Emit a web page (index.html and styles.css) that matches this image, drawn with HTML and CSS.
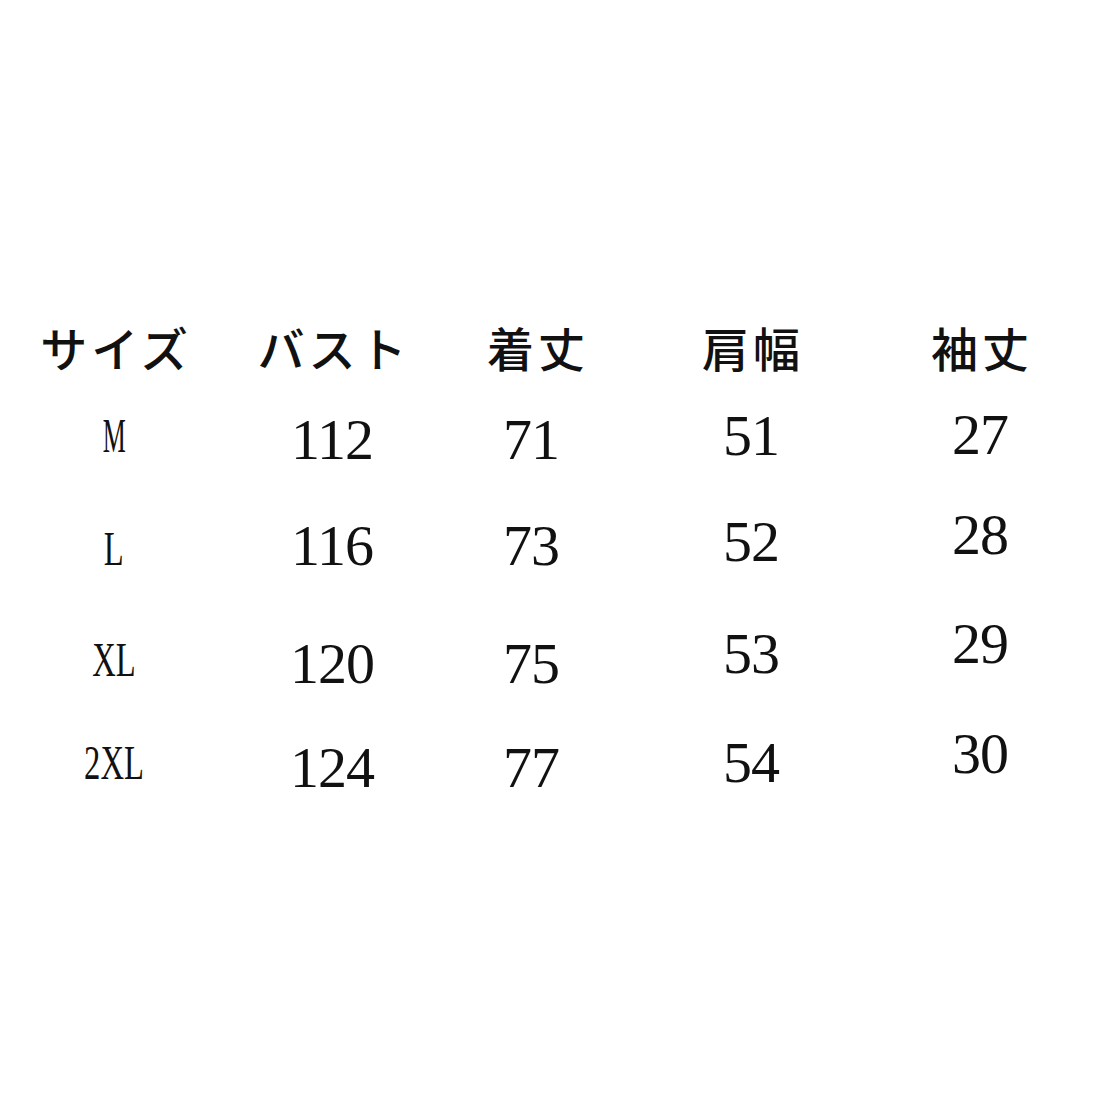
FILE: index.html
```html
<!DOCTYPE html>
<html lang="ja">
<head>
<meta charset="utf-8">
<title>サイズ表</title>
<link rel="stylesheet" href="styles.css">
</head>
<body>
<div class="chart">
  <div class="col col-size">
    <div class="head">サイズ</div>
    <div class="cell size"><span class="lbl lbl-m">M</span></div>
    <div class="cell size"><span class="lbl">L</span></div>
    <div class="cell size"><span class="lbl">XL</span></div>
    <div class="cell size"><span class="lbl">2XL</span></div>
  </div>
  <div class="col col-bust">
    <div class="head">バスト</div>
    <div class="cell num">112</div>
    <div class="cell num">116</div>
    <div class="cell num">120</div>
    <div class="cell num">124</div>
  </div>
  <div class="col col-length">
    <div class="head">着丈</div>
    <div class="cell num">71</div>
    <div class="cell num">73</div>
    <div class="cell num">75</div>
    <div class="cell num">77</div>
  </div>
  <div class="col col-shoulder">
    <div class="head">肩幅</div>
    <div class="cell num">51</div>
    <div class="cell num">52</div>
    <div class="cell num">53</div>
    <div class="cell num">54</div>
  </div>
  <div class="col col-sleeve">
    <div class="head">袖丈</div>
    <div class="cell num">27</div>
    <div class="cell num">28</div>
    <div class="cell num">29</div>
    <div class="cell num">30</div>
  </div>
</div>
</body>
</html>
```
FILE: styles.css
```css
html, body {
  margin: 0;
  padding: 0;
  background: #ffffff;
}

body {
  width: 1112px;
  height: 1112px;
  overflow: hidden;
  color: #111111;
}

.chart {
  display: grid;
  grid-template-columns: 228px 208px 190px 250px 208px;
  padding-top: 317px;
}

.col {
  display: grid;
  justify-items: center;
  align-items: center;
}

.col-size     { grid-template-rows: 60px 118px 108px 114px 92px; }
.col-bust,
.col-length   { grid-template-rows: 60px 126px 86px 150px 58px; }
.col-shoulder { grid-template-rows: 60px 118px 94px 130px 88px; }
.col-sleeve   { grid-template-rows: 60px 116px 84px 134px 86px; }

.head {
  font-family: "Noto Sans CJK JP", "Noto Sans", sans-serif;
  font-size: 47px;
  font-weight: 500;
  line-height: 60px;
  letter-spacing: 4px;
  text-indent: 4px;
  white-space: nowrap;
}

.col-length .head {
  text-indent: 14px;
}

.num {
  font-family: "Liberation Serif", "Times New Roman", serif;
  font-size: 58px;
  line-height: 58px;
  letter-spacing: -1px;
}

.size {
  font-family: "Liberation Serif", "Times New Roman", serif;
  font-size: 48px;
  line-height: 50px;
}

.lbl {
  display: inline-block;
  transform: scaleX(0.68);
}

.lbl-m {
  transform: scaleX(0.54);
}
```
